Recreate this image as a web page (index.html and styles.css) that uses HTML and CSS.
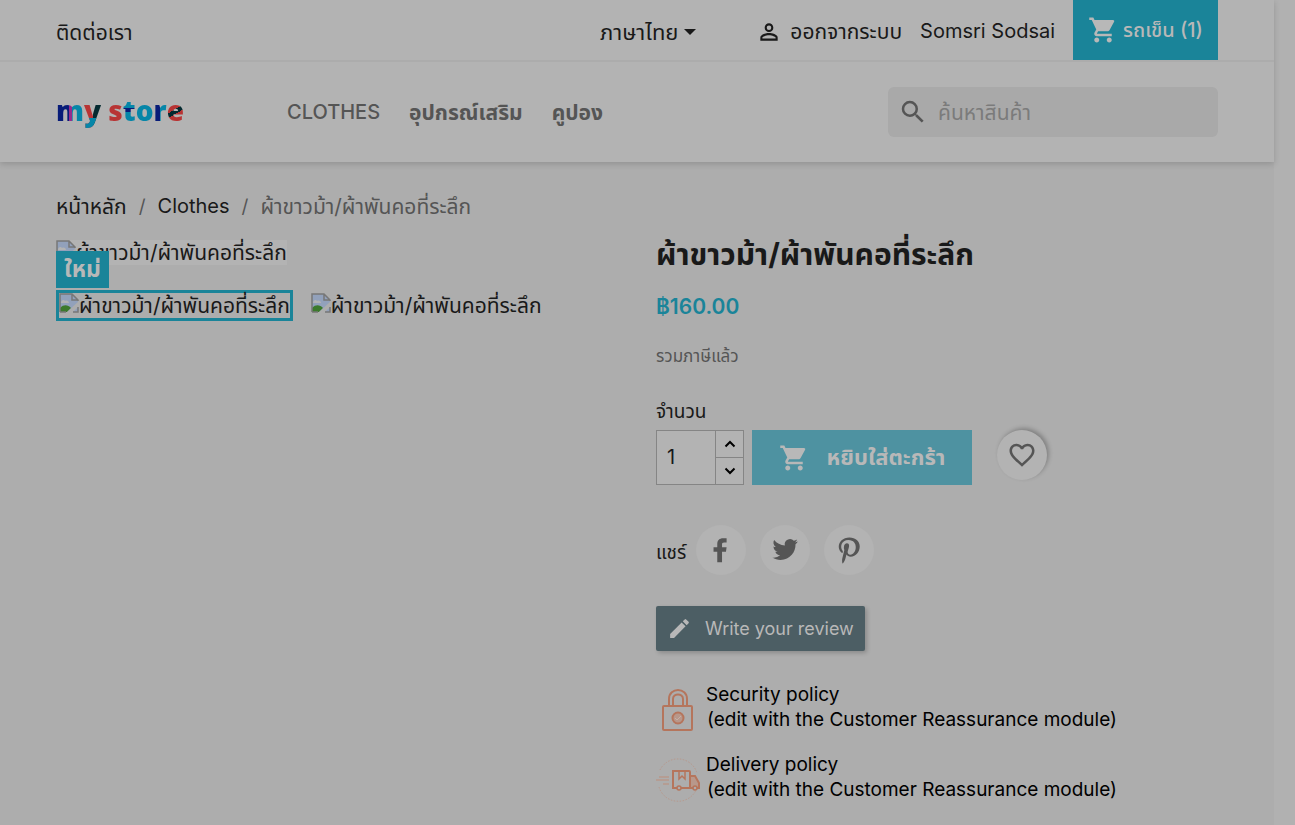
FILE: index.html
```html
<!DOCTYPE html>
<html lang="th">
<head>
<meta charset="utf-8">
<title>my store</title>
<link rel="stylesheet" href="styles.css">
</head>
<body>
<svg class="defs" aria-hidden="true">
  <symbol id="cart" viewBox="0 0 24 24"><path d="M7 18c-1.100 0-1.990.9-1.990 2S5.900 22 7 22s2-.9 2-2-.9-2-2-2zM1 2v2h2l3.600 7.590-1.350 2.450c-.16.280-.25.610-.25.960 0 1.100.9 2 2 2h12v-2H7.420c-.14 0-.25-.11-.25-.25l.03-.12.900-1.630h7.450c.75 0 1.410-.41 1.750-1.030l3.580-6.490A1 1 0 0 0 20 4H5.210l-.94-2H1zm16 16c-1.100 0-1.990.9-1.990 2s.89 2 1.990 2 2-.9 2-2-.9-2-2-2z"/></symbol>
  <symbol id="broken" viewBox="0 0 20 20"><path d="M1 1h12l6 6v12H1z" fill="#92a1bb"/><path d="M2 10c0-3 3-4 4-2 2-1 4 0 4 2z" fill="#b3b3b3"/><path d="M1 19v-4c4-4 8-3 11 0l-4 4z" fill="#3c7a2c"/><path d="M7 20 20 8v5l-7 7z" fill="#adadad"/><path d="M13 1v6h6M1 19V1h12l6 6v1M1 19h6M14 19h5v-5" fill="none" stroke="#777" stroke-width="1.500"/></symbol>
</svg>
<div class="page">
  <header class="header">
    <nav class="topbar">
      <div class="container topbar-row">
        <a class="contact" href="#">ติดต่อเรา</a>
        <button class="language" type="button">ภาษาไทย <span class="caret"></span></button>
        <a class="signout" href="#"><svg class="icon" viewBox="0 0 24 24"><path d="M12 5.900a2.100 2.100 0 1 1 0 4.200 2.100 2.100 0 0 1 0-4.200m0 9c2.970 0 6.100 1.460 6.100 2.100v1.100H5.900V17c0-.64 3.130-2.100 6.100-2.100M12 4a4 4 0 1 0 0 8 4 4 0 0 0 0-8zm0 9c-2.670 0-8 1.340-8 4v3h16v-3c0-2.660-5.330-4-8-4z"/></svg>ออกจากระบบ</a>
        <a class="account" href="#">Somsri Sodsai</a>
        <a class="cart" href="#"><svg class="icon"><use href="#cart"/></svg>รถเข็น (1)</a>
      </div>
    </nav>
    <div class="container main-row">
      <a class="logo" href="#"><span class="l-m">m</span><span class="l-y">y</span> <span class="l-s">s</span><span class="l-t">t</span><span class="l-o">o</span><span class="l-r">r</span><span class="l-e">e</span></a>
      <nav class="menu">
        <a class="latin" href="#">CLOTHES</a>
        <a href="#">อุปกรณ์เสริม</a>
        <a href="#">คูปอง</a>
      </nav>
      <form class="search">
        <svg class="icon" viewBox="0 0 24 24"><path d="M15.500 14h-.79l-.28-.27A6.470 6.470 0 0 0 16 9.500 6.500 6.500 0 1 0 9.500 16c1.610 0 3.090-.59 4.230-1.570l.27.280v.79l5 4.990L20.490 19l-4.990-5zm-6 0a4.500 4.500 0 1 1 0-9 4.500 4.500 0 0 1 0 9z"/></svg>
        <input type="text" placeholder="ค้นหาสินค้า" aria-label="ค้นหาสินค้า">
      </form>
    </div>
  </header>
  <main class="container">
    <nav class="breadcrumb">
      <a href="#">หน้าหลัก</a><span class="sep">/</span><a class="crumb-latin" href="#">Clothes</a><span class="sep">/</span><span class="current">ผ้าขาวม้า/ผ้าพันคอที่ระลึก</span>
    </nav>
    <div class="product">
      <section class="gallery">
        <div class="cover"><span class="picture"><svg><use href="#broken"/></svg>ผ้าขาวม้า/ผ้าพันคอที่ระลึก</span><span class="flag">ใหม่</span></div>
        <div class="thumbs">
          <span class="thumb selected"><svg><use href="#broken"/></svg>ผ้าขาวม้า/ผ้าพันคอที่ระลึก</span>
          <span class="thumb"><svg><use href="#broken"/></svg>ผ้าขาวม้า/ผ้าพันคอที่ระลึก</span>
        </div>
      </section>
      <section class="details">
        <h1>ผ้าขาวม้า/ผ้าพันคอที่ระลึก</h1>
        <p class="price">฿160.00</p>
        <p class="tax">รวมภาษีแล้ว</p>
        <label class="qty-label" for="qty">จำนวน</label>
        <div class="buy">
          <div class="qty">
            <input id="qty" type="text" value="1">
            <div class="steps">
              <button type="button" aria-label="+"><svg viewBox="0 0 12 12"><path d="m1.500 8.500 4.500-4.500 4.500 4.500"/></svg></button>
              <button type="button" aria-label="-"><svg viewBox="0 0 12 12"><path d="m1.500 3.500 4.500 4.500 4.500-4.500"/></svg></button>
            </div>
          </div>
          <button class="add" type="button"><svg class="icon"><use href="#cart"/></svg>หยิบใส่ตะกร้า</button>
          <button class="wish" type="button" aria-label="Wishlist"><svg viewBox="0 0 24 24"><path d="M16.500 3c-1.740 0-3.410.81-4.500 2.090C10.910 3.810 9.240 3 7.500 3 4.420 3 2 5.420 2 8.500c0 3.780 3.400 6.860 8.550 11.540L12 21.350l1.450-1.320C18.600 15.360 22 12.280 22 8.500 22 5.420 19.580 3 16.500 3zm-4.400 15.550-.1.100-.1-.1C7.140 14.240 4 11.390 4 8.500 4 6.500 5.500 5 7.500 5c1.540 0 3.040.99 3.570 2.360h1.870C13.460 5.990 14.960 5 16.500 5c2 0 3.500 1.500 3.500 3.500 0 2.890-3.140 5.740-7.900 10.050z"/></svg></button>
        </div>
        <div class="share">
          <span>แชร์</span>
          <a href="#" aria-label="Facebook"><svg viewBox="0 0 30 30"><path d="M21 2.500V7h-2.700c-1.800 0-2.200.9-2.200 2.200V12H21l-.7 4.900h-4.200V28H11V16.900H7V12h4V8.500C11 4.500 13.500 2.300 17.200 2.300c1.700 0 3.300.1 3.800.2z"/></svg></a>
          <a href="#" aria-label="Twitter"><svg viewBox="0 0 24 24"><path d="M23 4.800c-.8.400-1.700.6-2.600.7.900-.6 1.600-1.400 2-2.500-.9.500-1.800.9-2.800 1.100A4.500 4.500 0 0 0 11.900 8.200C8.200 8 4.900 6.200 2.700 3.500c-1.200 2-.6 4.700 1.400 6-.7 0-1.400-.2-2-.6 0 2.200 1.500 4.100 3.600 4.500-.7.200-1.400.2-2 .1.600 1.800 2.200 3.100 4.200 3.100A9 9 0 0 1 1.200 18.500c2 1.300 4.400 2 6.900 2 8.400 0 13.200-7.100 12.900-13.400.9-.6 1.500-1.400 2-2.300z"/></svg></a>
          <a href="#" aria-label="Pinterest"><svg viewBox="0 0 30 30"><path d="M15.500 1.500C8.400 1.500 4 6.300 4 11.600c0 2.500 1.300 5.500 3.500 6.500.6.300.6-.1.900-1.300.1-.4 0-.6-.3-.9-3-3.700-1.500-11.500 6.300-11.500 11.200 0 9.100 15.600 2 15.600-1.900 0-3.200-1.500-2.800-3.400.5-2.200 1.500-4.500 1.500-6.100 0-4-5.600-3.400-5.600 1.800 0 1.600.5 2.700.5 2.700l-2.200 9.200c-.4 1.700-.1 4.400.1 5 .1.300.4.300.6.100.9-1.200 2.200-3.300 2.600-5l1.200-4.400c.6 1.200 2.500 2.200 4.400 2.200 5.800 0 9.800-5.200 9.800-11.200 0-5.500-4.700-9.400-11-9.400z"/></svg></a>
        </div>
        <button class="review" type="button"><svg viewBox="0 0 24 24"><path d="M3 17.250V21h3.750L17.810 9.940l-3.750-3.750L3 17.250zM20.710 7.040a1 1 0 0 0 0-1.410l-2.340-2.340a1 1 0 0 0-1.410 0l-1.830 1.830 3.750 3.750 1.830-1.830z"/></svg>Write your review</button>
        <ul class="policies">
          <li>
            <svg viewBox="0 0 44 44"><g fill="none" stroke="#b5755c" stroke-width="2"><rect x="7" y="18" width="29" height="24" rx="1"/><path d="M13 18v-7c0-12 18-12 18 0v7M17 18v-7c0-6 10-6 10 0v7"/><circle cx="22" cy="30" r="5.500" fill="#b8988b"/></g><path d="m19 30 2 2 4-4" fill="none" stroke="#c5b0a7"/></svg>
            <div>Security policy<br><span class="note">(edit with the Customer Reassurance module)</span></div>
          </li>
          <li>
            <svg viewBox="0 0 44 44"><g fill="none" stroke="#b8988b"><path d="M4 12a20 20 0 0 1 37 3M3 29a20 20 0 0 0 38 1" stroke-dasharray="1.500 1.500"/><path d="M3 19h10M0 22h13M7 26h6" stroke-width="1.500"/></g><path d="M34 19h6l3 6v5h-9z" fill="#b8988b"/><g fill="none" stroke="#b5755c" stroke-width="2"><path d="M17 13h16q1 0 1 1v16H17zM34 18h5l4 7v5h-9"/><path d="M23 13v8l3-3 3 3v-8" stroke-width="1.500"/><g fill="#adadad" stroke-width="1.500"><circle cx="23" cy="30" r="2"/><circle cx="39" cy="30" r="2"/></g></g></svg>
            <div>Delivery policy<br><span class="note">(edit with the Customer Reassurance module)</span></div>
          </li>
        </ul>
      </section>
    </div>
  </main>
</div>
</body>
</html>
```
FILE: styles.css
```css
* { box-sizing: border-box; }

body {
  margin: 0;
  padding-right: 21px;
  background: #b1b1b1;
  color: #191919;
  font: 21px/25px Inter, "Noto Sans Thai", "Noto Sans", sans-serif;
}

a { color: inherit; text-decoration: none; }
button, input { font: inherit; color: inherit; border: 0; padding: 0; margin: 0; }
svg { flex: none; fill: currentColor; }
.defs { position: absolute; width: 0; height: 0; }
.icon { width: 30px; height: 30px; }

.page { min-height: 100vh; background: #adadad; }
.container { max-width: 1162px; margin: 0 auto; }

.header {
  background: #b3b3b3;
  box-shadow: 0 2px 6px rgba(0, 0, 0, .16);
}
.topbar { border-bottom: 2px solid #acacac; }
.topbar-row { display: flex; align-items: center; height: 60px; white-space: nowrap; }
.contact { margin-right: auto; padding-top: 4px; }
.language { display: flex; align-items: center; gap: 6px; margin-right: 60px; padding-top: 4px; background: none; font-size: 22px; }
.caret { border: 6px solid transparent; border-top-color: #191919; border-bottom: 0; }
.signout { display: flex; align-items: center; gap: 8px; margin-right: 18px; padding-top: 3px; }
.signout .icon { width: 26px; height: 26px; }
.account { margin-right: 18px; padding-top: 2px; font-size: 20px; }
.cart {
  display: flex;
  align-items: center;
  gap: 5px;
  height: 60px;
  padding: 0 15px;
  background: #1a8499;
  color: #b8b8b8;
  font-size: 20px;
  font-weight: 500;
}

.main-row { display: flex; align-items: center; height: 100px; }
.logo { width: 231px; padding-bottom: 4px; font: 900 28px/40px "Open Sans", sans-serif; }
.logo span { color: transparent; -webkit-background-clip: text; background-clip: text; }
.l-m { background-image: linear-gradient(90deg, #081c78 45%, #962a8c 45%, #962a8c 58%, #0686a8 58%); }
.l-y { background-image: linear-gradient(transparent 72%, #0686a8 72%), linear-gradient(90deg, #b83434 55%, #042a30 55%); }
.l-s { background-image: linear-gradient(#b83434, #b83434); }
.l-t { background-image: linear-gradient(#0686a8 46%, #081c78 46%, #081c78 54%, #0686a8 54%); }
.l-o { background-image: linear-gradient(#0686a8, #0686a8); }
.l-r { background-image: linear-gradient(90deg, #081c78 50%, #0686a8 50%); }
.l-e { background-image: linear-gradient(150deg, #b83434 48%, #042a30 48%, #042a30 58%, #b83434 58%); }
.menu { display: flex; gap: 29px; margin-right: auto; color: #555; font-weight: 700; }
.menu .latin { font-size: 20px; font-weight: 500; }
.search {
  display: flex;
  align-items: center;
  gap: 10px;
  width: 330px;
  height: 50px;
  padding: 0 10px;
  border-radius: 6px;
  background: #a9a9a9;
  color: #555;
}
.search input { flex: 1; min-width: 0; background: none; }
.search input::placeholder { color: #7b7b7b; opacity: 1; }

.breadcrumb { display: flex; align-items: center; padding: 32px 0 21px; }
.sep { margin: 0 12px; color: #555; font-size: 19px; }
.crumb-latin { font-size: 20px; }
.current { color: #555; }

.product { display: grid; grid-template-columns: 1fr 1fr; gap: 38px; }
.cover { position: relative; height: 50px; }
.picture, .thumb { display: inline-flex; align-items: flex-start; white-space: nowrap; }
.picture { background: #b3b3b3; }
.picture svg, .thumb svg { width: 20px; height: 20px; }
.flag {
  position: absolute;
  top: 11px;
  left: 0;
  padding: 6px 8px;
  background: #1a8499;
  color: #b8b8b8;
  font-size: 23px;
  font-weight: 700;
}
.thumbs { display: flex; gap: 15px; }
.thumb { border: 3px solid transparent; }
.thumb.selected { border-color: #1a8499; }

h1 { margin: 0; font-size: 30px; line-height: 28px; font-weight: 700; }
.price { margin: 26px 0 0; font-weight: 600; color: #1a8499; }
.tax { margin: 25px 0 0; font-size: 17px; color: #555; }
.qty-label { display: block; margin-top: 30px; font-size: 19px; }
.buy { display: flex; margin-top: 6px; }
.qty { display: flex; width: 88px; height: 55px; border: 1px solid #858585; background: #b3b3b3; font-size: 20px; }
.qty input { width: 58px; padding: 0 10px; background: none; }
.steps { display: flex; flex-direction: column; flex: 1; border-left: 1px solid #858585; }
.steps button { display: grid; place-items: center; flex: 1; background: none; }
.steps button + button { border-top: 1px solid #858585; }
.steps svg { width: 12px; height: 12px; fill: none; stroke: #000; stroke-width: 2; }
.add {
  display: flex;
  align-items: center;
  justify-content: center;
  gap: 18px;
  width: 220px;
  margin-left: 8px;
  background: #4e92a1;
  color: #b8b8b8;
  font-size: 22px;
  font-weight: 700;
}
.wish {
  display: grid;
  place-items: center;
  width: 50px;
  height: 50px;
  margin-left: 25px;
  border-radius: 50%;
  background: #b3b3b3;
  color: #555;
  box-shadow: 2px -2px 4px rgba(0, 0, 0, .25);
}
.wish svg { width: 30px; height: 30px; }

.share { display: flex; align-items: center; gap: 14px; margin-top: 40px; }
.share span { margin-right: -4px; padding-top: 4px; font-size: 19px; }
.share a { display: grid; place-items: center; width: 50px; height: 50px; border-radius: 50%; background: #b3b3b3; color: #555; }
.share svg { width: 28px; height: 28px; }

.review {
  display: flex;
  align-items: center;
  gap: 13px;
  height: 45px;
  margin-top: 31px;
  padding: 0 11px;
  border-radius: 2px;
  background: #4c5e64;
  color: #b8b8b8;
  font-size: 18px;
  box-shadow: 2px 2px 4px rgba(0, 0, 0, .2);
}
.review svg { width: 25px; height: 25px; }

.policies { display: grid; gap: 20px; margin: 31px 0 0; padding: 0; list-style: none; color: #000; font-size: 19px; }
.policies li { display: flex; align-items: flex-end; gap: 6px; }
.policies svg { width: 44px; height: 44px; }
.note { padding-left: 1px; }
```
